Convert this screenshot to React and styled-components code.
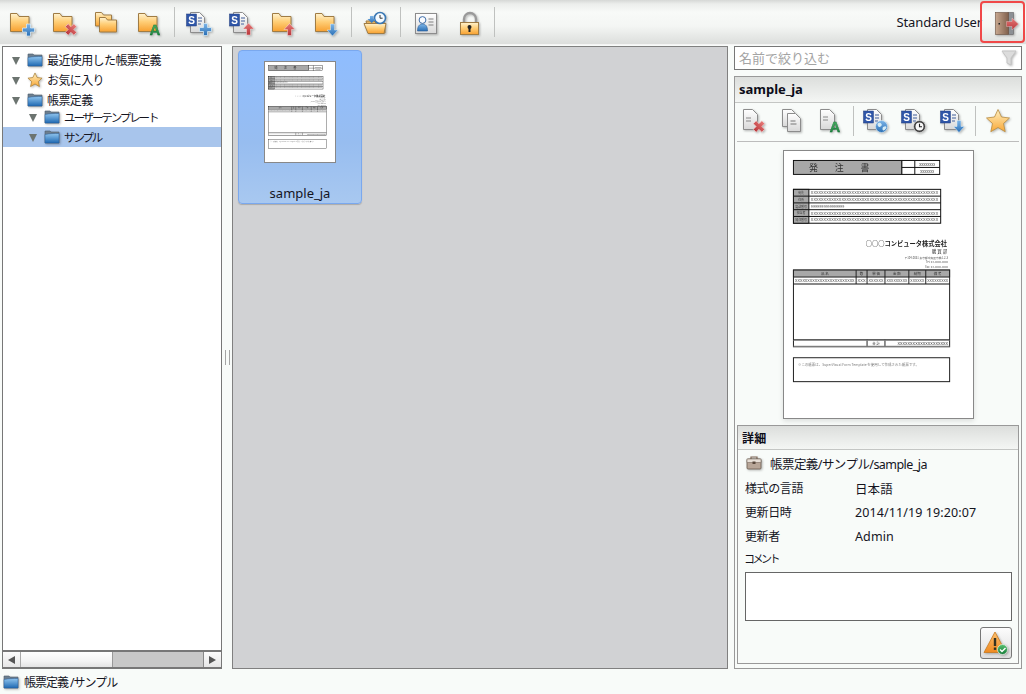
import React from "react";
import styled, { createGlobalStyle } from "styled-components";

const Global = createGlobalStyle`
  html, body { margin: 0; padding: 0; background: #f8fbf9; }
  body { font-family: "Noto Sans", "Noto Sans CJK JP", sans-serif; font-size: 12px; color: #14141e; }
`;

const Page = styled.div`
  width: 1026px; height: 694px; display: flex; flex-direction: column; overflow: hidden; background: #f8fbf9;
`;
const Toolbar = styled.header`
  height: 44px; flex: none; display: flex; align-items: center; padding-left: 1px; box-sizing: border-box;
  background: linear-gradient(#d6d8d6 0, #eceeec 4px, #f8faf8 12px, #f4f6f4 26px, #dcdedc 44px);
  box-shadow: 0 1px 0 #f4f4f4;
`;
const ToolButton = styled.div`
  width: 42.5px; height: 44px; flex: none; display: flex; align-items: center; justify-content: center; padding-top: 4px; box-sizing: border-box;
`;
const ToolSep = styled.div`
  width: 1px; height: 30px; flex: none; background: #bfc1bf; margin: 0 ${p => p.$after ?? 3.5}px 0 2.5px;
`;
const Spacer = styled.div`flex: 1;`;
const UserName = styled.span`font-size: 13px; margin-right: -2px; letter-spacing: -0.15px;`;
const LogoutButton = styled.div`
  width: 45px; height: 42px; box-sizing: border-box; border: 2px solid #f04848; border-radius: 4px; margin-right: 1px;
  display: flex; align-items: center; justify-content: center; padding-left: 8px;
`;
const Main = styled.main`
  flex: 1; min-height: 0; margin-top: 2px; display: flex; padding: 0 4px 0 2px;
`;
const TreePane = styled.nav`
  width: 220px; flex: none; box-sizing: border-box; border: 1px solid #777; border-bottom-width: 2px; background: #fff;
  display: flex; flex-direction: column;
`;
const Tree = styled.div`flex: 1; padding-top: 3px;`;
const TreeRow = styled.div`
  height: 20px; display: flex; align-items: center; box-sizing: border-box;
  padding-left: ${p => p.$child ? 26 : 9}px;
  margin-top: ${p => p.$tuck ? -3 : 0}px;
  background: ${p => p.$selected ? "#a8c5ec" : "transparent"};
`;
const Caret = styled.span`
  width: 0; height: 0; border-left: 4px solid transparent; border-right: 4px solid transparent; border-top: 8px solid #6c7470;
  margin: 1px 7px 0 0; flex: none;
`;
const TreeLabel = styled.span`
  margin-left: 4px; font-size: ${p => p.$kana ? 11.5 : 12}px; letter-spacing: ${p => p.$kana ? -2.1 : -0.6}px; white-space: nowrap;
`;
const ScrollBar = styled.div`
  height: 15px; flex: none; display: flex; border-top: 2px solid #777; box-sizing: content-box; background: #c8c8c8;
`;
const ScrollArrow = styled.div`
  width: 17px; flex: none; display: flex; align-items: center; justify-content: center;
  background: linear-gradient(#fbfbfb, #e6e6e6);
  &::before {
    content: ""; width: 0; height: 0; border-top: 4px solid transparent; border-bottom: 4px solid transparent;
    ${p => p.$dir === "left" ? "border-right: 7px solid #555;" : "border-left: 7px solid #555;"}
  }
`;
const ScrollThumb = styled.div`
  width: 93px; flex: none; background: linear-gradient(#fff, #f4f4f4 60%, #e4e4e4); border-left: 1px solid #aaa; border-right: 1px solid #999; box-sizing: border-box;
`;
const ScrollTrack = styled.div`flex: 1; background: #c8c8c8; border-right: 1px solid #888;`;
const Splitter = styled.div`
  width: 10px; flex: none; display: flex; align-items: center; justify-content: center;
  &::before { content: ""; width: 3px; height: 15px; border-left: 1px solid #a4a4a4; border-right: 1px solid #a4a4a4; }
`;
const Gallery = styled.section`
  width: 496px; flex: none; box-sizing: border-box; border: 1px solid #808080; background: #d1d2d4; padding: 3px 5px;
`;
const Card = styled.div`
  width: 124px; height: 154px; box-sizing: border-box; border: 1px solid #7aa8ee; border-radius: 4px;
  background: linear-gradient(#8fbdff, #97bdf0 60%, #a8c8f0);
  display: flex; flex-direction: column; align-items: center; padding-top: 10px; box-shadow: 0 1px 1px #aaa;
`;
const CardName = styled.div`font-size: 13px; margin-top: 21px; line-height: 18px;`;
const ThumbPage = styled.div`
  width: 72px; height: 102px; flex: none; background: #fff; border: 1px solid #888; box-sizing: border-box; display: flex;
`;
const Side = styled.aside`
  width: 288px; margin-left: 6px; flex: none; display: flex; flex-direction: column;
`;
const FilterBox = styled.div`
  height: 24px; flex: none; box-sizing: border-box; border: 1px solid #777; background: #fff;
  display: flex; align-items: center; justify-content: space-between; padding: 0 4px 1px; 
  color: #a4a4a4; font-size: 13px;
`;
const InfoPanel = styled.div`
  flex: 1; margin-top: 6px; box-sizing: border-box; border: 1px solid #999; display: flex; flex-direction: column; min-height: 0;
`;
const PanelHeader = styled.div`
  height: 23px; flex: none; display: flex; align-items: center; padding: 0 0 2px 4px; box-sizing: content-box; font-weight: 700; font-size: 13px;
  background: linear-gradient(#dcdedc, #f4f6f4); border-bottom: 1px solid #c4c6c4; color: #0c0c18; margin-bottom: -2px;
`;
const IconRow = styled.div`
  height: 40px; flex: none; margin: 0 2px; display: flex; align-items: center; border-bottom: 1px solid #bcbcbc;
  & > :first-child { margin-left: -3px; }
`;
const IconSlot = styled.div`
  width: 38.5px; flex: none; display: flex; align-items: center; justify-content: center;
`;
const IconSep = styled.div`width: 1px; height: 30px; background: #bfc1bf; flex: none; margin: 0 3px;`;
const PreviewArea = styled.div`
  height: 283px; flex: none; display: flex; justify-content: center; padding-top: 8px; box-sizing: border-box;
`;
const PreviewPage = styled.div`
  width: 191px; height: 269px; box-sizing: border-box; background: #fff; border: 1px solid #888; box-shadow: 0 2px 5px rgba(0,0,0,.12); display: flex;
`;
const Details = styled.div`
  flex: 1; margin: 0 2px 4px; border: 1px solid #999; display: flex; flex-direction: column; box-sizing: border-box; min-height: 0;
`;
const DetailsHeader = styled(PanelHeader)`
  font-size: 12px; padding: 0 0 0 4px; margin-bottom: 0; letter-spacing: 0.2px;
`;
const DetailsBody = styled.div`padding: 1px 6px 0 7px; display: flex; flex-direction: column;`;
const PathRow = styled.div`
  height: 24px; display: flex; align-items: center; gap: 8px; padding-left: 1px; font-size: 12.5px;
  letter-spacing: -0.55px;
`;
const InfoRow = styled.div`
  height: 24px; display: flex; align-items: center; font-size: 12.5px;
  margin-top: ${p => p.$first ? 1 : 0}px;
`;
const InfoLabel = styled.span`width: 110px; flex: none; font-size: 12px; letter-spacing: -0.4px;`;
const InfoValue = styled.span`font-size: 12.5px; letter-spacing: 0.1px;`;
const CommentLabel = styled.div`height: 19px; display: flex; align-items: center; font-size: 11px; letter-spacing: -2.5px; margin-left: -1px;`;
const CommentBox = styled.div`
  height: 49px; margin-top: 5px; box-sizing: border-box; border: 1px solid #666; background: #fff;
`;
const ActionRow = styled.div`display: flex; justify-content: flex-end; margin-top: 6px;`;
const ActionButton = styled.div`
  width: 32px; height: 32px; box-sizing: border-box; border: 1px solid #777; border-radius: 3px;
  background: linear-gradient(#fcfcfc, #dedede); display: flex; align-items: center; justify-content: center;
`;
const StatusBar = styled.footer`
  height: 25px; flex: none; display: flex; align-items: center; gap: 5px; padding: 1px 0 0 3px; box-sizing: border-box;
  font-size: 12px; letter-spacing: -1px;
`;
const Defs = styled.svg`position: absolute; width: 0; height: 0;`;
const IconSvg = styled.svg`flex: none; display: block; overflow: visible; filter: drop-shadow(1px 1px 1px rgba(0,0,0,.28));`;
const SheetSvg = styled.svg`width: 100%; height: 100%; display: block;`;

const Gradients = () => (
  <Defs aria-hidden="true">
    <defs>
      <linearGradient id="gOrange" x1="0" y1="0" x2="0" y2="1">
        <stop offset="0" stopColor="#fff3d0" /><stop offset=".45" stopColor="#ffcf78" /><stop offset="1" stopColor="#f7a030" />
      </linearGradient>
      <linearGradient id="gPage" x1="0" y1="0" x2="0" y2="1">
        <stop offset="0" stopColor="#ffffff" /><stop offset="1" stopColor="#d8d8d8" />
      </linearGradient>
      <linearGradient id="gBlue" x1="0" y1="0" x2="0" y2="1">
        <stop offset="0" stopColor="#7db5e8" /><stop offset="1" stopColor="#2a6fb5" />
      </linearGradient>
      <linearGradient id="gRed" x1="0" y1="0" x2="0" y2="1">
        <stop offset="0" stopColor="#e77a78" /><stop offset="1" stopColor="#b8363a" />
      </linearGradient>
      <linearGradient id="gGreen" x1="0" y1="0" x2="0" y2="1">
        <stop offset="0" stopColor="#58c070" /><stop offset="1" stopColor="#137a36" />
      </linearGradient>
      <linearGradient id="gTree" x1="0" y1="0" x2="0" y2="1">
        <stop offset="0" stopColor="#8fc4ee" /><stop offset="1" stopColor="#1f69b2" />
      </linearGradient>
      <linearGradient id="gStar" x1="0" y1="0" x2="0" y2="1">
        <stop offset="0" stopColor="#fff0c0" /><stop offset="1" stopColor="#f8a838" />
      </linearGradient>
      <linearGradient id="gDoor" x1="0" y1="0" x2="1" y2="0">
        <stop offset="0" stopColor="#c8a890" /><stop offset="1" stopColor="#80604c" />
      </linearGradient>
      <linearGradient id="gWarn" x1="0" y1="0" x2="0" y2="1">
        <stop offset="0" stopColor="#fcc070" /><stop offset="1" stopColor="#f08a20" />
      </linearGradient>
      <filter id="softThumb" x="-5%" y="-5%" width="110%" height="110%"><feGaussianBlur stdDeviation="0.3" /></filter>
      <filter id="softPage" x="-5%" y="-5%" width="110%" height="110%"><feGaussianBlur stdDeviation="0.42" /></filter>
    </defs>
  </Defs>
);

const Icon = ({ size = 26, view = 26, children }) => (
  <IconSvg width={size} height={size} viewBox={`0 0 ${view} ${view}`}>{children}</IconSvg>
);

const FolderShape = () => (
  <path d="M1.500 2.500h6.500l2 3h10v15h-18.500z" fill="url(#gOrange)" stroke="#a07c44" strokeWidth="1" />
);
const Plus = ({ x = 0, y = 0 }) => (
  <path transform={`translate(${x} ${y})`} d="M4 0h4v4h4v4H8v4H4V8H0V4h4z" fill="url(#gBlue)" stroke="#dff0fb" strokeWidth=".7" />
);
const Cross = ({ x = 0, y = 0 }) => (
  <path transform={`translate(${x} ${y}) rotate(45 6 6)`} d="M4 0h4v4h4v4H8v4H4V8H0V4h4z" fill="url(#gRed)" stroke="#f4d4d4" strokeWidth=".6" />
);
const Up = ({ x = 0, y = 0 }) => (
  <path transform={`translate(${x} ${y})`} d="M5.500 0l5.500 6H7.500v6h-4V6H0z" fill="url(#gRed)" stroke="#f8e0e0" strokeWidth=".5" />
);
const Down = ({ x = 0, y = 0 }) => (
  <path transform={`translate(${x} ${y})`} d="M3.500 0h4v6H11l-5.500 6L0 6h3.500z" fill="url(#gBlue)" stroke="#e0f0fa" strokeWidth=".5" />
);
const LetterA = ({ x = 18, y = 24 }) => (
  <text x={x} y={y} textAnchor="middle" fontFamily="Liberation Sans" fontWeight="700" fontSize="15" fill="url(#gGreen)" stroke="#0e6a2e" strokeWidth=".3">A</text>
);
const FolderPlus = () => <Icon><FolderShape /><Plus x={13.500} y={13} /></Icon>;
const FolderCross = () => <Icon><FolderShape /><Cross x={13} y={12.500} /></Icon>;
const FolderCopy = () => (
  <Icon>
    <path d="M1.500 1.500h6l2 2.500h8v11h-16z" fill="url(#gOrange)" stroke="#a07c44" />
    <path d="M5.500 6.500h6l2 2.500h9v12h-17z" fill="url(#gOrange)" stroke="#a07c44" />
  </Icon>
);
const FolderA = () => <Icon><FolderShape /><LetterA x={18} y={24} /></Icon>;
const FolderUp = () => <Icon><FolderShape /><Up x={13} y={12.500} /></Icon>;
const FolderDown = () => <Icon><FolderShape /><Down x={13} y={13} /></Icon>;
const DocBody = ({ x = 4.500, w = 14 }) => (
  <path d={`M${x} 1.500h${w - 5}l5 5v15h-${w}z`} fill="url(#gPage)" stroke="#8c8c8c" />
);
const SBadge = () => (
  <g>
    <rect x="0.500" y="3" width="10" height="12" fill="#2f56a8" stroke="#233f80" strokeWidth=".5" />
    <text x="5.500" y="12.700" textAnchor="middle" fontFamily="Liberation Sans" fontWeight="700" fontSize="10" fill="#fff">S</text>
    <path d="M12 7h4M12 10h4M12 13h3" stroke="#7c90b8" strokeWidth="1.300" />
  </g>
);
const SDoc = ({ children }) => <Icon><DocBody /><SBadge />{children}</Icon>;
const Globe = () => (
  <g>
    <circle cx="18.500" cy="18.500" r="6" fill="url(#gBlue)" stroke="#dcecf8" strokeWidth=".6" />
    <path d="M14.500 16c2-2 3-1 4 0s-1 3-2 3-2-1-2-3zM20 19c2-1 3-1 3.500 0-.5 2-2 3.500-3 3.500s-1.500-2-.5-3.500z" fill="#d6ecf6" />
  </g>
);
const Clock = () => (
  <g>
    <circle cx="18.500" cy="18.500" r="6" fill="#3c3c3c" stroke="#eee" strokeWidth=".6" />
    <circle cx="18.500" cy="18.500" r="4" fill="#f8f8f8" />
    <path d="M18.500 15.800v3h2.500" stroke="#222" strokeWidth="1.100" fill="none" />
  </g>
);
const OpenFolderClock = () => (
  <Icon>
    <path d="M3 10h8l2 2h9v10H6z" fill="#e8b460" stroke="#a07c44" />
    <path d="M1 12.500h22l-2 10H5z" fill="url(#gOrange)" stroke="#a07c44" />
    <circle cx="17" cy="7" r="5.500" fill="#f6fbff" stroke="#3a78b4" strokeWidth="1.600" />
    <path d="M17 4v3.200h2.600" stroke="#333" strokeWidth="1" fill="none" />
    <path d="M7 5h3.500v3H13l-4.250 4-4.250-4H7z" fill="url(#gBlue)" />
  </Icon>
);
const ContactCard = () => (
  <Icon>
    <rect x="1.500" y="2.500" width="21" height="20" fill="url(#gPage)" stroke="#8c8c8c" />
    <circle cx="8.500" cy="9" r="3.400" fill="#f8fbff" stroke="#3f6ea8" />
    <path d="M3.500 20c0-5 2-7 5-7s5 2 5 7z" fill="url(#gBlue)" stroke="#2a5a94" strokeWidth=".6" />
    <path d="M14.500 8h5M14.500 11h5M14.500 14h5" stroke="#808080" strokeWidth="1" />
  </Icon>
);
const Padlock = () => (
  <Icon>
    <path d="M7 12V8a6 6 0 0 1 12 0v4" fill="none" stroke="#9a9a9a" strokeWidth="2.400" />
    <rect x="3.500" y="11.500" width="18" height="12" fill="url(#gOrange)" stroke="#a07c44" />
    <circle cx="12.500" cy="16" r="2" fill="#222" />
    <rect x="11.500" y="16" width="2" height="5" fill="#222" />
  </Icon>
);
const Door = () => (
  <Icon>
    <rect x="14" y="3.500" width="5.500" height="22" fill="#8c9094" stroke="#666" strokeWidth=".6" />
    <rect x="1.500" y="3.500" width="13" height="22" fill="url(#gDoor)" stroke="#6a5040" strokeWidth=".6" />
    <rect x="4.500" y="14" width="1.500" height="1.500" fill="#222" />
    <path d="M12.500 12.500h5.500V9l6.500 6-6.500 6v-3.500h-5.500z" fill="url(#gRed)" stroke="#f0d0d0" strokeWidth=".4" />
  </Icon>
);
const DocCross = () => <Icon><DocBody x={3.500} /><path d="M6 10h5M6 13h5" stroke="#888" /><Cross x={13} y={12.500} /></Icon>;
const DocCopy = () => (
  <Icon>
    <path d="M3.500 1.500h9l3 3v14h-12z" fill="url(#gPage)" stroke="#8c8c8c" />
    <path d="M8.500 5.500h8l5 5v13h-13z" fill="url(#gPage)" stroke="#8c8c8c" />
    <path d="M11.500 13h5M11.500 16h6" stroke="#777" />
  </Icon>
);
const DocA = () => <Icon><DocBody x={3.500} /><path d="M6 9h5M6 12h5" stroke="#888" /><LetterA x={18} y={24} /></Icon>;
const Star = () => (
  <Icon>
    <path d="M13 1.500l3.500 7.500 8 1-6 5.500 1.700 8.200L13 19.500 5.800 23.700 7.500 15.500 1.500 10l8-1z" fill="url(#gStar)" stroke="#b88c40" strokeWidth=".8" />
  </Icon>
);
const TreeFolder = () => (
  <Icon size={16} view={16}>
    <path d="M1 2h5l1 1h8v11H1z" fill="#6d7e8e" stroke="#4f6070" strokeWidth=".6" />
    <path d="M1 5.500c5-1 9-1 14-1V14H1z" fill="url(#gTree)" stroke="#2a5f98" strokeWidth=".5" />
  </Icon>
);
const TreeStar = () => (
  <Icon size={16} view={26}>
    <path d="M13 1.500l3.500 7.500 8 1-6 5.500 1.700 8.200L13 19.500 5.800 23.700 7.500 15.500 1.500 10l8-1z" fill="url(#gStar)" stroke="#a88038" strokeWidth="1.200" />
  </Icon>
);
const Funnel = () => (
  <Icon size={16} view={16}>
    <path d="M1 1h14L10 8v7l-4-2V8z" fill="#dcdcdc" stroke="#c4c4c4" />
  </Icon>
);
const Briefcase = () => (
  <Icon size={16} view={16}>
    <path d="M5 4V2h6v2" fill="none" stroke="#806858" strokeWidth="1.200" />
    <rect x="1" y="4" width="14" height="10" rx="1" fill="#b8a698" stroke="#6a5a4e" strokeWidth=".8" />
    <rect x="1" y="4" width="14" height="3.500" fill="#e8e0d8" stroke="#6a5a4e" strokeWidth=".5" />
    <rect x="6.500" y="6.500" width="3" height="2.500" fill="#5a4a3e" />
  </Icon>
);
const WarningOk = () => (
  <Icon size={26} view={26}>
    <path d="M12 2L23 22.500H1z" fill="url(#gWarn)" stroke="#c87a20" strokeWidth=".8" strokeLinejoin="round" />
    <rect x="10.800" y="8" width="2.400" height="8" fill="#332" />
    <rect x="10.800" y="17.500" width="2.400" height="2.400" fill="#332" />
    <circle cx="19.500" cy="19.500" r="5" fill="url(#gGreen)" stroke="#e8f4e8" strokeWidth=".7" />
    <path d="M17 19.500l2 2 3.500-3.500" stroke="#fff" strokeWidth="1.400" fill="none" />
  </Icon>
);

const run = n => "X".repeat(n);
const FILL = "#a8a8a8";
const rowLabels = ["宛先", "住所", "電話番号", "担当者", "発注番号"];
const Sheet = ({ soft }) => (
  <SheetSvg viewBox="0 0 190 268" preserveAspectRatio="none" aria-hidden="true">
    <g filter={`url(#${soft})`} fontFamily="Noto Sans CJK JP, sans-serif" fill="#333" stroke="none">
      <rect x="9.500" y="9.500" width="109" height="14" fill={FILL} stroke="#111" />
      <text x="64" y="20" fontSize="9" textAnchor="middle" letterSpacing="17">発注書</text>
      <rect x="118.500" y="9.500" width="38" height="14" fill="#fff" stroke="#111" />
      <path d="M118.500 16.500h38M131.500 9.500v14" stroke="#111" />
      <text x="144" y="15" fontSize="3.500" textAnchor="middle">XXXXXXXX</text>
      <text x="144" y="22" fontSize="3.500" textAnchor="middle">XXXXXXX</text>
      <rect x="9.500" y="38.500" width="148" height="34" fill="#fff" stroke="#111" />
      <rect x="9.500" y="38.500" width="15.500" height="34" fill={FILL} stroke="#111" />
      <path d="M9.500 45.300h148M9.500 52.100h148M9.500 58.900h148M9.500 65.700h148" stroke="#111" />
      {rowLabels.map((t, i) => (
        <text key={t} x="17.200" y={43.300 + i * 6.800} fontSize="3" textAnchor="middle" fill="#444">{t}</text>
      ))}
      {[0, 1, 3, 4].map(i => (
        <text key={i} x="27" y={43.500 + i * 6.800} fontSize="3.800" textLength="128" lengthAdjust="spacingAndGlyphs" fill="#555">{run(50)}</text>
      ))}
      <text x="27" y="57" fontSize="3.800" fill="#555">9999999999999999</text>
      <text x="164" y="95" fontSize="6.300" textAnchor="end" fontWeight="700" fill="#222">○○○コンピュータ株式会社</text>
      <text x="164" y="102" fontSize="4.500" textAnchor="end" fill="#333">購 買 部</text>
      <text x="165" y="108" fontSize="2.800" textAnchor="end" fill="#555">〒104-0031 東京都中央区京橋1-2-3</text>
      <text x="165" y="112.500" fontSize="2.800" textAnchor="end" fill="#555">Tel: 03-0000-0000</text>
      <text x="165" y="117" fontSize="2.800" textAnchor="end" fill="#555">Fax: 03-0000-0000</text>
      <rect x="9.500" y="119.500" width="157" height="77" fill="#fff" stroke="#222" />
      <rect x="9.500" y="119.500" width="157" height="7" fill={FILL} stroke="#222" />
      <path d="M9.500 133.500h157M9.500 189.500h157" stroke="#111" />
      <path d="M72.500 119.500v14M83.500 119.500v14M101.500 119.500v14M125.500 119.500v14M142.500 119.500v14M83.500 189.500v7M101.500 189.500v7" stroke="#222" />
      <rect x="9.500" y="189.500" width="157" height="1" fill="#888" />
      <rect x="9.500" y="195.500" width="157" height="1" fill="#888" />
      <text x="41" y="124.500" fontSize="3.500" textAnchor="middle">品 名</text>
      <text x="78" y="124.500" fontSize="3.500" textAnchor="middle">数</text>
      <text x="92.500" y="124.500" fontSize="3.500" textAnchor="middle">単 価</text>
      <text x="113.500" y="124.500" fontSize="3.500" textAnchor="middle">金 額</text>
      <text x="134" y="124.500" fontSize="3.500" textAnchor="middle">納期</text>
      <text x="154.500" y="124.500" fontSize="3.500" textAnchor="middle">備 考</text>
      <text x="11" y="131.500" fontSize="3" textLength="60" lengthAdjust="spacingAndGlyphs" fill="#555">{run(24)}</text>
      <text x="74" y="131.500" fontSize="3" textLength="8" lengthAdjust="spacingAndGlyphs" fill="#555">{run(3)}</text>
      <text x="85" y="131.500" fontSize="3" textLength="15" lengthAdjust="spacingAndGlyphs" fill="#555">{run(6)}</text>
      <text x="103" y="131.500" fontSize="3" textLength="21" lengthAdjust="spacingAndGlyphs" fill="#555">{run(9)}</text>
      <text x="127" y="131.500" fontSize="3" textLength="14" lengthAdjust="spacingAndGlyphs" fill="#555">{run(6)}</text>
      <text x="144" y="131.500" fontSize="3" textLength="21" lengthAdjust="spacingAndGlyphs" fill="#555">{run(9)}</text>
      <text x="92.500" y="194.500" fontSize="3.500" textAnchor="middle">合 計</text>
      <text x="114" y="194.500" fontSize="3" textLength="51" lengthAdjust="spacingAndGlyphs" fill="#444">{run(20)}</text>
      <rect x="9.500" y="207.500" width="157" height="24" fill="#fff" stroke="#222" />
      <text x="14" y="215.500" fontSize="3.500" fill="#777">※この帳票は、SuperVisual Form Template を使用して作成された帳票です。</text>
    </g>
  </SheetSvg>
);

const treeRows = [
  { icon: <TreeFolder />, label: "最近使用した帳票定義" },
  { icon: <TreeStar />, label: "お気に入り" },
  { icon: <TreeFolder />, label: "帳票定義" },
  { icon: <TreeFolder />, label: "ユーザーテンプレート", child: true, tuck: true, kana: true },
  { icon: <TreeFolder />, label: "サンプル", child: true, selected: true, kana: true },
];

export default function App() {
  return (
    <Page>
      <Global />
      <Gradients />
      <Toolbar>
        <ToolButton><FolderPlus /></ToolButton>
        <ToolButton><FolderCross /></ToolButton>
        <ToolButton><FolderCopy /></ToolButton>
        <ToolButton><FolderA /></ToolButton>
        <ToolSep />
        <ToolButton><SDoc><Plus x={13.500} y={12.500} /></SDoc></ToolButton>
        <ToolButton><SDoc><Up x={14} y={12} /></SDoc></ToolButton>
        <ToolButton><FolderUp /></ToolButton>
        <ToolButton><FolderDown /></ToolButton>
        <ToolSep />
        <ToolButton><OpenFolderClock /></ToolButton>
        <ToolSep $after={5} />
        <ToolButton><ContactCard /></ToolButton>
        <ToolButton><Padlock /></ToolButton>
        <ToolSep />
        <Spacer />
        <UserName>Standard User</UserName>
        <LogoutButton><Door /></LogoutButton>
      </Toolbar>
      <Main>
        <TreePane>
          <Tree>
            {treeRows.map(r => (
              <TreeRow key={r.label} $child={r.child} $tuck={r.tuck} $selected={r.selected}>
                <Caret />
                {r.icon}
                <TreeLabel $kana={r.kana}>{r.label}</TreeLabel>
              </TreeRow>
            ))}
          </Tree>
          <ScrollBar>
            <ScrollArrow $dir="left" />
            <ScrollThumb />
            <ScrollTrack />
            <ScrollArrow $dir="right" />
          </ScrollBar>
        </TreePane>
        <Splitter />
        <Gallery>
          <Card>
            <ThumbPage><Sheet soft="softThumb" /></ThumbPage>
            <CardName>sample_ja</CardName>
          </Card>
        </Gallery>
        <Side>
          <FilterBox>名前で絞り込む<Funnel /></FilterBox>
          <InfoPanel>
            <PanelHeader>sample_ja</PanelHeader>
            <IconRow>
              <IconSlot><DocCross /></IconSlot>
              <IconSlot><DocCopy /></IconSlot>
              <IconSlot><DocA /></IconSlot>
              <IconSep />
              <IconSlot><SDoc><Globe /></SDoc></IconSlot>
              <IconSlot><SDoc><Clock /></SDoc></IconSlot>
              <IconSlot><SDoc><Down x={13.500} y={12.500} /></SDoc></IconSlot>
              <IconSep />
              <IconSlot><Star /></IconSlot>
            </IconRow>
            <PreviewArea>
              <PreviewPage><Sheet soft="softPage" /></PreviewPage>
            </PreviewArea>
            <Details>
              <DetailsHeader>詳細</DetailsHeader>
              <DetailsBody>
                <PathRow><Briefcase />帳票定義/サンプル/sample_ja</PathRow>
                <InfoRow $first><InfoLabel>様式の言語</InfoLabel><InfoValue>日本語</InfoValue></InfoRow>
                <InfoRow><InfoLabel>更新日時</InfoLabel><InfoValue>2014/11/19 19:20:07</InfoValue></InfoRow>
                <InfoRow><InfoLabel>更新者</InfoLabel><InfoValue>Admin</InfoValue></InfoRow>
                <CommentLabel>コメント</CommentLabel>
                <CommentBox />
                <ActionRow><ActionButton><WarningOk /></ActionButton></ActionRow>
              </DetailsBody>
            </Details>
          </InfoPanel>
        </Side>
      </Main>
      <StatusBar><TreeFolder />帳票定義 /サンプル</StatusBar>
    </Page>
  );
}
